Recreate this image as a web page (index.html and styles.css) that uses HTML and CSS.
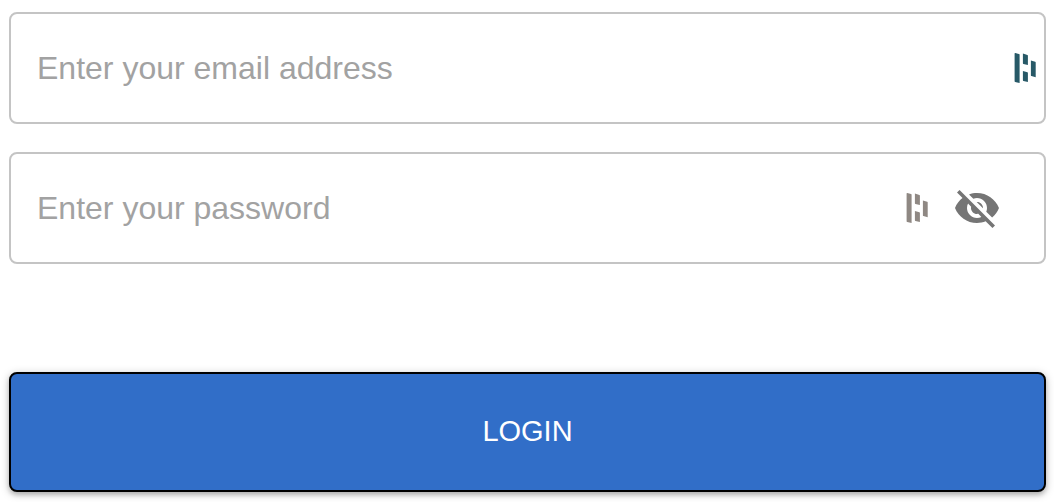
FILE: index.html
```html
<!DOCTYPE html>
<html lang="en">
<head>
<meta charset="utf-8">
<meta name="viewport" content="width=device-width, initial-scale=1">
<title>Login</title>
<link rel="stylesheet" href="styles.css">
</head>
<body>
<form class="login">
  <div class="field field-email">
    <input class="field-input" type="email" aria-label="Email address" placeholder="Enter your email address">
    <svg class="manager manager-active" viewBox="0 0 22 30" aria-hidden="true">
      <path d="M.6.6Q.6 0 1.2.1L5 1Q5.6 1.2 5.6 1.8V30L1.2 29Q.6 28.9.6 28.3ZM8.9.6L13.4 2Q13.9 2.2 13.9 2.8V12L9.4 10.9Q8.9 10.8 8.9 10.2ZM8.9 17.9L13.4 19.3Q13.9 19.5 13.9 20V29L9.4 27.9Q8.9 27.8 8.9 27.2ZM16.9 7.6L21.2 8.8Q21.7 9 21.7 9.5V24.2L17.4 23.1Q16.9 23 16.9 22.4Z"/>
    </svg>
  </div>
  <div class="field field-password">
    <input class="field-input" type="password" aria-label="Password" placeholder="Enter your password">
    <svg class="manager" viewBox="0 0 22 30" aria-hidden="true">
      <path d="M.6.6Q.6 0 1.2.1L5 1Q5.6 1.2 5.6 1.8V30L1.2 29Q.6 28.9.6 28.3ZM8.9.6L13.4 2Q13.9 2.2 13.9 2.8V12L9.4 10.9Q8.9 10.8 8.9 10.2ZM8.9 17.9L13.4 19.3Q13.9 19.5 13.9 20V29L9.4 27.9Q8.9 27.8 8.9 27.2ZM16.9 7.6L21.2 8.8Q21.7 9 21.7 9.5V24.2L17.4 23.1Q16.9 23 16.9 22.4Z"/>
    </svg>
    <button class="toggle" type="button" aria-label="Show password">
      <svg class="eye" viewBox="0 0 24 24" aria-hidden="true">
        <path d="M12 7c2.76 0 5 2.24 5 5 0 .65-.13 1.26-.36 1.83l2.92 2.92c1.51-1.26 2.7-2.89 3.43-4.75-1.73-4.39-6-7.5-11-7.5-1.4 0-2.74.25-3.98.7l2.16 2.16C10.74 7.13 11.35 7 12 7zM2 4.27l2.28 2.28.46.46C3.08 8.3 1.78 10.02 1 12c1.73 4.39 6 7.5 11 7.5 1.55 0 3.03-.3 4.38-.84l.42.42L19.73 22 21 20.73 3.27 3 2 4.27zM7.53 9.8l1.55 1.55c-.05.21-.08.43-.08.65 0 1.66 1.34 3 3 3 .22 0 .44-.03.65-.08l1.55 1.55c-.67.33-1.41.53-2.2.53-2.76 0-5-2.24-5-5 0-.79.2-1.53.53-2.2zm4.31-.78l3.15 3.15.02-.16c0-1.66-1.34-3-3-3l-.17.01z"/>
      </svg>
    </button>
  </div>
  <button class="submit" type="submit">LOGIN</button>
</form>
</body>
</html>
```
FILE: styles.css
```css
* {
  box-sizing: border-box;
}

body {
  margin: 0;
  background: #fff;
  font-family: "Liberation Sans", Arial, sans-serif;
}

.login {
  display: flex;
  flex-direction: column;
  gap: 28px;
  padding: 12px 8px 10px 9px;
}

.field {
  display: flex;
  align-items: center;
  border: 2px solid #c4c4c4;
  border-radius: 8px;
  background: #fff;
}

.field:focus-within {
  border-color: #316ec8;
}

.field-email {
  padding-right: 8px;
}

.field-password {
  padding-right: 43px;
}

.field-input {
  flex: 1;
  min-width: 0;
  padding: 34px 26px;
  border: 0;
  outline: 0;
  background: transparent;
  color: #212121;
  font: inherit;
  font-size: 32px;
  line-height: 40px;
}

.field-input::placeholder {
  color: #a2a2a2;
  opacity: 1;
}

.manager {
  flex: none;
  width: 22px;
  height: 30px;
  fill: #8f8883;
}

.manager-active {
  fill: #275967;
}

.toggle {
  display: flex;
  margin-left: 25px;
  padding: 0;
  border: 0;
  background: transparent;
  cursor: pointer;
}

.eye {
  width: 48px;
  height: 48px;
  fill: #757575;
}

.submit {
  margin-top: 80px;
  padding: 37px 32px 39px;
  border: 2px solid #000;
  border-radius: 8px;
  background: #316ec8;
  box-shadow: 0 2px 8px rgba(0, 0, 0, 0.25), 0 3px 4px rgba(0, 0, 0, 0.15);
  color: #fff;
  font: inherit;
  font-size: 29px;
  line-height: 40px;
  cursor: pointer;
}
```
